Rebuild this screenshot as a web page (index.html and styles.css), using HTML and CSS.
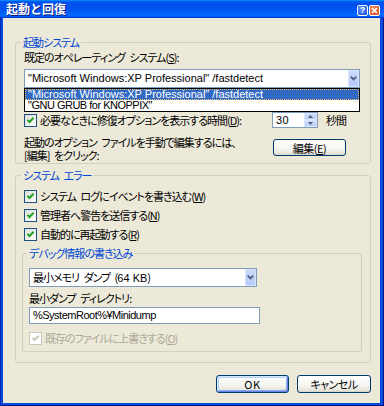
FILE: index.html
```html
<!DOCTYPE html>
<html lang="ja">
<head>
<meta charset="utf-8">
<title>起動と回復</title>
<link rel="stylesheet" href="styles.css">
</head>
<body>
<div class="window">
  <div class="titlebar">
    <span class="title">起動と回復</span>
    <div class="tbtns">
      <span class="tbtn help">?</span>
      <span class="tbtn close"><svg width="7" height="7" viewBox="0 0 7 7"><path d="M1 1L6 6M6 1L1 6" stroke="#fff" stroke-width="1.6"/></svg></span>
    </div>
  </div>
  <div class="client">
    <fieldset class="group g1">
      <legend>起動システム</legend>
      <div class="label">既定のオペレーティング システム(<u>S</u>):</div>
      <div class="combo wide">
        <span class="combo-text lat">"Microsoft Windows:XP Professional" /fastdetect</span>
        <span class="combo-btn"><svg width="7" height="5" viewBox="0 0 7 5"><path d="M0.7 0.7L3.5 3.5L6.3 0.7" fill="none" stroke="#4D6185" stroke-width="1.8"/></svg></span>
        <ul class="droplist">
          <li class="sel lat">"Microsoft Windows:XP Professional" /fastdetect</li>
          <li class="lat caps">"GNU GRUB for KNOPPIX"</li>
        </ul>
      </div>
      <div class="row timer">
        <div class="check timer-label"><span class="box"><svg width="11" height="11" viewBox="0 0 11 11"><path d="M2.5 4.8L4.5 7L8.6 2.8" fill="none" stroke="#21A121" stroke-width="2"/></svg></span><span>必要なときに修復オプションを表示する時間(<u>D</u>):</span></div>
        <div class="spin">
          <span class="spin-val lat">30</span>
          <span class="spin-btns">
            <span class="sb"><svg width="5" height="3" viewBox="0 0 5 3"><path d="M0 3L2.5 0L5 3Z" fill="#4D6185"/></svg></span>
            <span class="sb"><svg width="5" height="3" viewBox="0 0 5 3"><path d="M0 0L2.5 3L5 0Z" fill="#4D6185"/></svg></span>
          </span>
        </div>
        <span class="unit">秒間</span>
      </div>
      <div class="row edit">
        <div class="note">
          <div class="note-line">起動のオプション ファイルを手動で編集するには、</div>
          <div class="note-line">[編集] をクリック:</div>
        </div>
        <button class="btn edit-btn">編集(<u>E</u>)</button>
      </div>
    </fieldset>

    <fieldset class="group g2">
      <legend>システム エラー</legend>
      <div class="check"><span class="box"><svg width="11" height="11" viewBox="0 0 11 11"><path d="M2.5 4.8L4.5 7L8.6 2.8" fill="none" stroke="#21A121" stroke-width="2"/></svg></span><span>システム ログにイベントを書き込む(<u>W</u>)</span></div>
      <div class="check"><span class="box"><svg width="11" height="11" viewBox="0 0 11 11"><path d="M2.5 4.8L4.5 7L8.6 2.8" fill="none" stroke="#21A121" stroke-width="2"/></svg></span><span>管理者へ警告を送信する(<u>N</u>)</span></div>
      <div class="check"><span class="box"><svg width="11" height="11" viewBox="0 0 11 11"><path d="M2.5 4.8L4.5 7L8.6 2.8" fill="none" stroke="#21A121" stroke-width="2"/></svg></span><span>自動的に再起動する(<u>R</u>)</span></div>

      <fieldset class="group g3">
        <legend>デバッグ情報の書き込み</legend>
        <div class="combo dump">
          <span class="combo-text">最小メモリ ダンプ (<span class="lat">64 KB</span>)</span>
          <span class="combo-btn"><svg width="7" height="5" viewBox="0 0 7 5"><path d="M0.7 0.7L3.5 3.5L6.3 0.7" fill="none" stroke="#4D6185" stroke-width="1.8"/></svg></span>
        </div>
        <div class="label dir-label">最小ダンプ ディレクトリ:</div>
        <div class="field lat path">%SystemRoot%¥Minidump</div>
        <div class="check disabled"><span class="box"><svg width="11" height="11" viewBox="0 0 11 11"><path d="M2.5 4.8L4.5 7L8.6 2.8" fill="none" stroke="#CAC8BB" stroke-width="2"/></svg></span><span>既存のファイルに上書きする(<u>O</u>)</span></div>
      </fieldset>
    </fieldset>

    <div class="actions">
      <button class="btn default ok">OK</button>
      <button class="btn cancel">キャンセル</button>
    </div>
  </div>
</div>
</body>
</html>
```

FILE: styles.css
```css
* { box-sizing: border-box; }
html, body { margin: 0; padding: 0; }
body {
  width: 384px;
  height: 406px;
  overflow: hidden;
  background: #ECE9D8;
  font-family: "Noto Sans CJK JP", "Noto Sans", sans-serif;
  font-size: 11px;
  letter-spacing: -1px;
  word-spacing: 3px;
  font-feature-settings: "palt";
  color: #000;
}
u { text-decoration: underline; text-underline-offset: 1px; }
.lat { font-family: "Liberation Sans", sans-serif; font-size: 11px; letter-spacing: 0; word-spacing: 0; }
.lat.caps { letter-spacing: -0.5px; }
.lat.path { letter-spacing: -0.5px; }

.window {
  width: 384px;
  height: 406px;
  display: flex;
  flex-direction: column;
  background: #0A4BDB;
  box-shadow: inset 1px 0 #0029B8, inset -1px 0 #00138C, inset 0 -1px #00138C;
}
.titlebar {
  height: 18px;
  flex: none;
  display: flex;
  align-items: center;
  justify-content: space-between;
  padding: 0 4px 0 6px;
  background: linear-gradient(180deg, #0997FF 0, #0053EE 10%, #0050EE 40%, #0066FF 86%, #005BFF 92%, #003DD7 96%, #003DD7 100%);
}
.title {
  color: #fff;
  font-weight: bold;
  font-size: 12px;
  line-height: 18px;
  letter-spacing: 0;
  font-feature-settings: normal;
  text-shadow: 1px 1px #0A1883;
}
.tbtns { display: flex; gap: 1px; align-self: flex-start; margin-top: 5px; }
.tbtn {
  width: 11px;
  height: 11px;
  border: 1px solid #fff;
  border-radius: 2px;
  display: flex;
  align-items: center;
  justify-content: center;
  color: #fff;
  font-size: 9px;
  font-weight: bold;
  line-height: 1;
  letter-spacing: 0;
  font-family: "Liberation Sans", sans-serif;
}
.help { background: radial-gradient(circle at 35% 30%, #5A92F8, #1853E0); }
.close { background: radial-gradient(circle at 35% 30%, #F08A62, #D2461C); }

.client {
  flex: 1;
  margin: 0 4px 3px 3px;
  background: #ECE9D8;
  padding: 18px 9px 0 12px;
}

.group {
  margin: 0;
  border: 1px solid #D0D0BF;
  border-radius: 3px;
  min-width: 0;
}
.group legend {
  color: #0046D5;
  padding: 0 2px;
  line-height: 13px;
}
.g1 { width: 356px; padding: 2px 8px 1px 8px; }
.g1 legend { margin-left: -3px; }

.label { line-height: 13px; white-space: nowrap; }
.g1 .label { margin-bottom: 5px; }

.combo {
  position: relative;
  display: flex;
  align-items: center;
  height: 19px;
  border: 1px solid #7F9DB9;
  background: #fff;
}
.combo.wide { width: 336px; }
.combo.dump { width: 228px; }
.combo-text { padding-left: 3px; white-space: nowrap; line-height: 13px; }
.combo-btn {
  margin-left: auto;
  width: 11px;
  height: 17px;
  display: flex;
  align-items: center;
  justify-content: center;
  border-radius: 2px;
  background: linear-gradient(180deg, #CCDAFC, #B6C9F8);
  box-shadow: inset 0 0 0 1px #D8E3FC;
}
.droplist {
  position: absolute;
  top: 18px;
  left: -1px;
  width: 336px;
  height: 24px;
  margin: 0;
  padding: 0;
  list-style: none;
  background: #fff;
  border: 1px solid #000;
}
.droplist li {
  height: 11px;
  line-height: 11px;
  padding-left: 3px;
  white-space: nowrap;
}
.droplist li.sel {
  background: #316AC5;
  color: #fff;
  outline: 1px dotted #E8C36A;
  outline-offset: -1px;
}

.row { display: flex; }
.timer { margin-top: 24px; height: 16px; align-items: center; white-space: nowrap; }
.timer-label { flex: 0 0 248px; }

.check {
  display: flex;
  align-items: center;
  gap: 3px;
  line-height: 13px;
  height: 13px;
  white-space: nowrap;
}
.box {
  width: 13px;
  height: 13px;
  flex: none;
  border: 1px solid #1C5180;
  background: linear-gradient(135deg, #DCDCD7, #FFFFFF);
  display: flex;
}
.check.disabled { color: #ACA899; }
.check.disabled .box { border-color: #CAC8BB; background: #fff; }

.spin {
  width: 46px;
  height: 16px;
  flex: none;
  border: 1px solid #7F9DB9;
  background: #fff;
  display: flex;
  align-items: center;
}
.spin-val { padding-left: 3px; flex: 1; letter-spacing: 0.5px; }
.spin-btns {
  width: 13px;
  height: 14px;
  display: flex;
  flex-direction: column;
}
.sb {
  flex: 1;
  display: flex;
  align-items: center;
  justify-content: center;
  border-radius: 1px;
  background: linear-gradient(180deg, #D2DEFC, #B9CBF7);
  box-shadow: inset 0 0 0 1px #DCE5FC;
}
.unit { margin-left: 8px; }

.edit { margin-top: 8px; }
.note { flex: 0 0 249px; white-space: nowrap; }
.note-line { height: 13px; line-height: 13px; }

.btn {
  font: inherit;
  font-size: 11px;
  letter-spacing: -0.5px;
  font-feature-settings: "palt";
  color: #000;
  padding: 0;
  border: 1px solid #003C74;
  border-radius: 3px;
  background: linear-gradient(180deg, #FFFFFF 0, #F4F4F0 60%, #E6E4DA 90%, #D6D0C5 100%);
  line-height: 14px;
}
.edit-btn { width: 73px; height: 17px; margin-top: 3px; }

.g2 { width: 356px; margin-top: 5px; padding: 8px 8px 10px 6px; }
.g2 legend { margin-left: -1px; }
.g2 > .check { margin-left: 2px; }
.g2 > .check + .check { margin-top: 6px; }

.g3 { width: 340px; margin-top: 6px; padding: 8px 6px 6px 6px; }
.g3 legend { margin-left: -2px; }
.dir-label { margin-top: 5px; }
.field {
  width: 231px;
  height: 17px;
  margin-top: 2px;
  border: 1px solid #7F9DB9;
  background: #fff;
  padding-left: 3px;
  line-height: 15px;
}
.g3 .check { margin-top: 8px; }

.actions {
  display: flex;
  justify-content: flex-end;
  gap: 8px;
  margin-top: 12px;
}
.ok { width: 73px; height: 18px; letter-spacing: 0.5px; }
.cancel { width: 74px; height: 18px; }
.btn.default {
  box-shadow: inset 1px 1px #CEE7FF, inset -1px -1px #6982EE, inset 2px 2px #BCD4F6, inset -2px -2px #89ADE4;
}
```
